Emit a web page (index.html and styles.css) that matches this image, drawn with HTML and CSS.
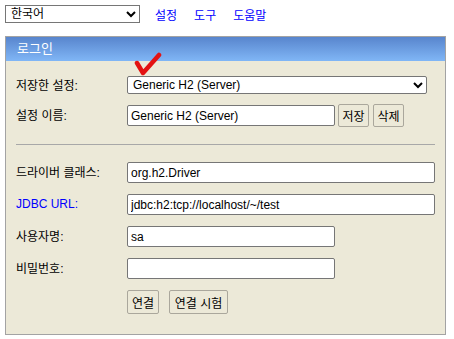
FILE: index.html
```html
<!DOCTYPE html>
<html lang="ko">
<head>
    <meta charset="UTF-8">
    <title>H2 Console</title>
    <link rel="stylesheet" href="styles.css">
</head>
<body>
    <div class="topbar">
        <select class="lang-select">
            <option>한국어</option>
        </select>
        <a href="#" class="top-link">설정</a>
        <a href="#" class="top-link">도구</a>
        <a href="#" class="top-link">도움말</a>
    </div>

    <div class="panel">
        <div class="panel-title">로그인</div>
        <div class="panel-body">
            <!-- red check mark drawn over the saved settings select -->
            <svg class="check-mark" width="30" height="26" viewBox="0 0 30 26">
                <path d="M4 11 L10 21 L26 3" fill="none" stroke="#e31212" stroke-width="4.5" stroke-linecap="round" stroke-linejoin="round"/>
            </svg>

            <div class="form-row first">
                <label>저장한 설정:</label>
                <select class="saved-select">
                    <option>Generic H2 (Server)</option>
                </select>
            </div>
            <div class="form-row second">
                <label>설정 이름:</label>
                <div class="field-group">
                    <input type="text" class="short-input" value="Generic H2 (Server)">
                    <button class="small-button">저장</button>
                    <button class="small-button">삭제</button>
                </div>
            </div>

            <div class="separator"></div>

            <div class="form-row first">
                <label>드라이버 클래스:</label>
                <input type="text" class="long-input" value="org.h2.Driver">
            </div>
            <div class="form-row">
                <label class="link-label">JDBC URL:</label>
                <input type="text" class="long-input" value="jdbc:h2:tcp://localhost/~/test">
            </div>
            <div class="form-row">
                <label>사용자명:</label>
                <input type="text" class="short-input" value="sa">
            </div>
            <div class="form-row">
                <label>비밀번호:</label>
                <input type="password" class="short-input" value="">
            </div>
            <div class="form-row">
                <span></span>
                <div class="button-group">
                    <button class="action-button connect">연결</button>
                    <button class="action-button test">연결 시험</button>
                </div>
            </div>
        </div>
    </div>
</body>
</html>
```

FILE: styles.css
```css
/* Base */
* {
    box-sizing: border-box;
}

body {
    margin: 0;
    padding: 5px;
    background: #fff;
    font-family: 'Liberation Sans', 'Noto Sans CJK KR', sans-serif;
    font-size: 12px;
    color: #000;
}

select, input, button {
    font-family: 'Liberation Sans', 'Noto Sans CJK KR', sans-serif;
    font-size: 12px;
    color: #000;
}

/* Top bar */
.topbar {
    display: flex;
    align-items: center;
    height: 18px;
}

.lang-select {
    width: 135px;
    height: 18px;
    padding: 0 1px;
    border: 1px solid #767676;
    border-radius: 0;
    background: #fff;
    margin-right: 15px;
}

.top-link {
    color: #0000ff;
    text-decoration: none;
    font-size: 12px;
    margin-right: 17px;
}

/* Login panel */
.panel {
    position: relative;
    width: 441px;
    margin-top: 13px;
    border: 1px solid #a3a3a3;
}

.panel-title {
    height: 24px;
    line-height: 24px;
    padding-left: 11px;
    font-size: 13px;
    color: #fff;
    background: linear-gradient(#5885cd, #80b6f6);
}

.panel-body {
    position: relative;
    background: #ece9d8;
    padding: 15px 10px 20px 10px;
}

.check-mark {
    position: absolute;
    left: 127px;
    top: -9px;
}

/* Form rows */
.form-row {
    display: grid;
    grid-template-columns: 111px auto;
    align-items: center;
    margin-top: 11px;
}

.form-row label {
    margin-top: -2px;
}

.form-row.first {
    margin-top: 0;
}

.form-row.second {
    margin-top: 10px;
}

.link-label {
    color: #0000ff;
}

.saved-select {
    width: 300px;
    height: 18px;
    padding: 0 1px;
    border: 1px solid #767676;
    border-radius: 2px;
    background: #fff;
}

.field-group, .button-group {
    display: flex;
    align-items: center;
}

input {
    height: 21px;
    padding: 1px 3px;
    border: 1px solid #767676;
    border-radius: 2px;
    background: #fff;
}

.short-input {
    width: 208px;
}

.long-input {
    width: 308px;
}

button {
    background: #ece9d8;
    border: 1px solid #aaa79c;
    border-radius: 2px;
    padding: 0 3px;
    cursor: pointer;
}

.small-button {
    height: 23px;
    width: 31px;
    margin-left: 3px;
}

.small-button + .small-button {
    margin-left: 4px;
}

.action-button {
    height: 24px;
    margin-right: 10px;
}

.action-button.connect {
    width: 32px;
}

.action-button.test {
    width: 59px;
}

/* Separator */
.separator {
    height: 1px;
    background: #a8a8a8;
    margin: 17px 0 17px 0;
}
```
